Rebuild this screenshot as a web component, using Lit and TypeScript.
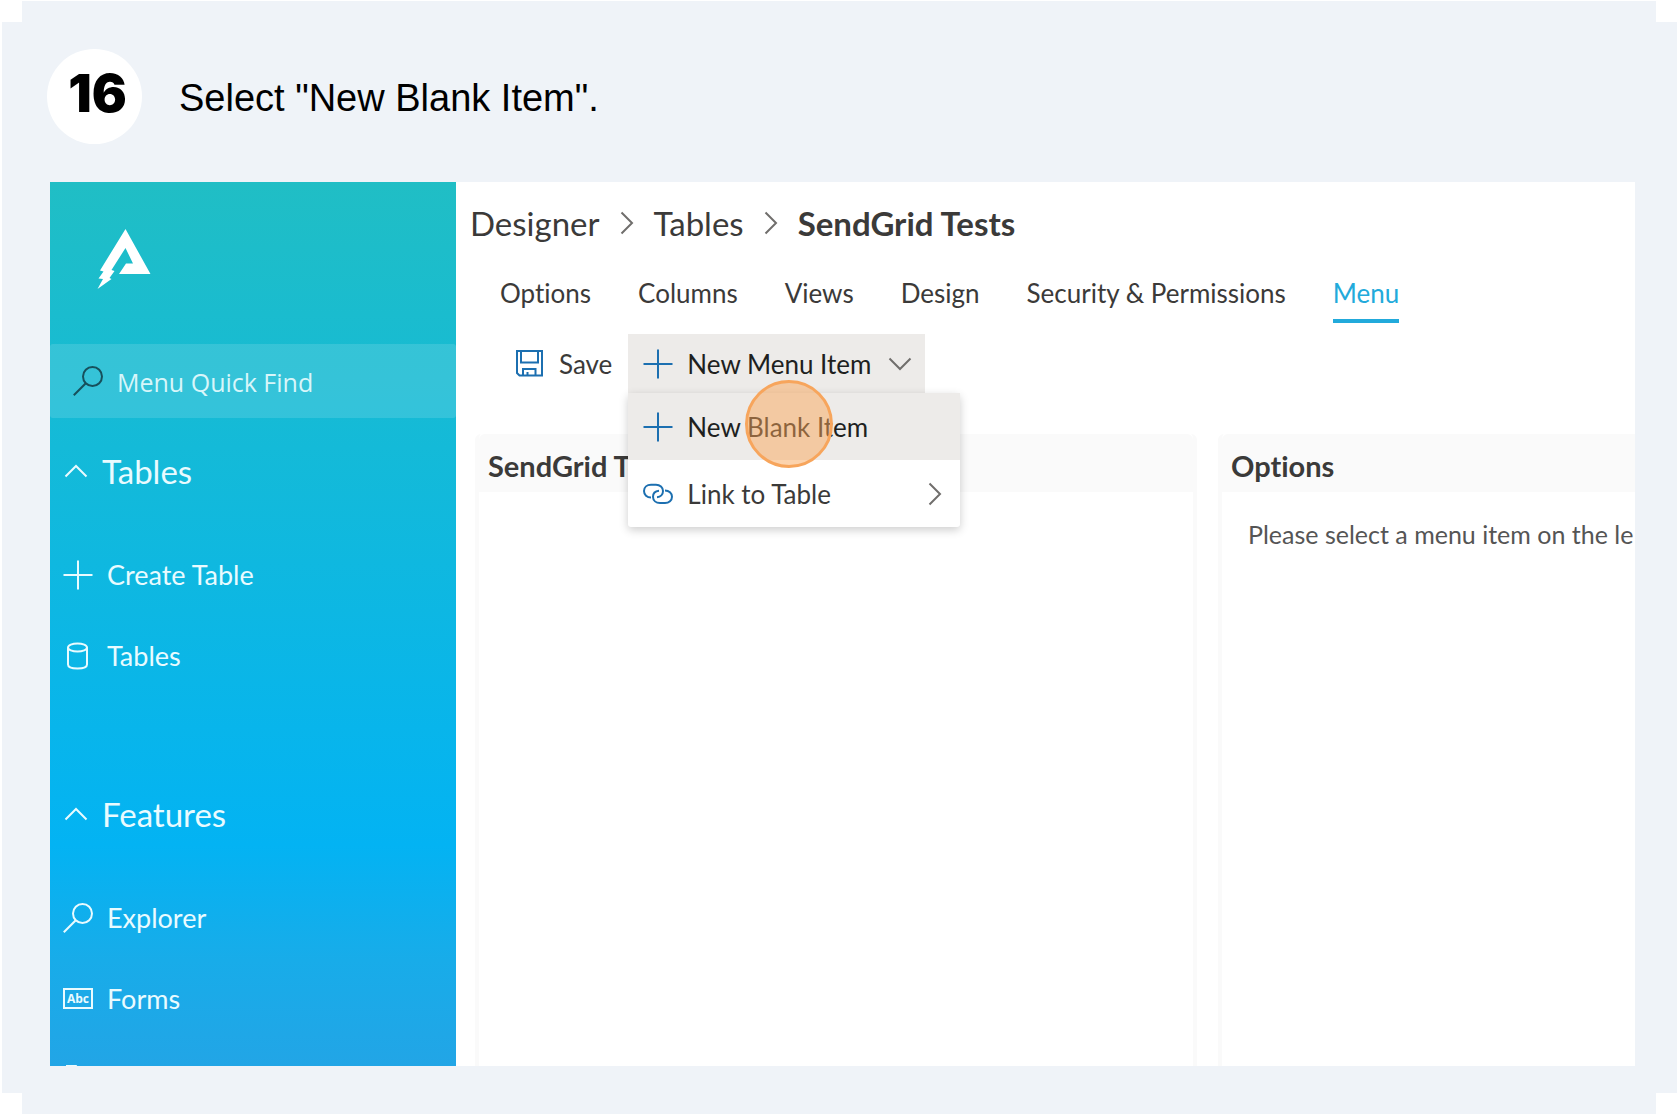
import { LitElement, html, css, svg } from "lit";
import { customElement } from "lit/decorators.js";
import { classMap } from "lit/directives/class-map.js";

const icon = (name: string, body: unknown, box = 30) =>
  html`<svg class=${"icon " + name} viewBox=${`0 0 ${box} ${box}`} aria-hidden="true">${body}</svg>`;

const search = svg`<circle cx="19.5" cy="10.5" r="9.5"/><path d="M12.8 17.2 0.8 29.2"/>`;
const plus = svg`<path d="M15 0.5V29.5M0.5 15H29.5"/>`;
const chevronUp = svg`<path d="M4.5 20.5 15 10 25.5 20.5"/>`;
const chevronDown = svg`<path d="M4.5 9.5 15 20 25.5 9.5"/>`;
const chevronRight = svg`<path d="M9.5 4.5 20 15 9.5 25.5"/>`;
const database = svg`<path d="M5 6.5V23.5C5 26 9 27.5 14.500 27.500S24 26 24 23.500V6.500"/><ellipse cx="14.500" cy="6.500" rx="9.500" ry="4"/>`;
const save = svg`<path d="M2 2H27V26.500H4.500L2 24ZM6 2V13.500H23V2M8 26.500V20H20.500V26.500M12.500 26.500V23"/>`;
const link = svg`<path d="M8 18.500C4 18.500 1 15.800 1 12S4 5.700 8 5.700H13C17 5.700 20 8.500 20 12S17.500 18 14 18.300M22 11.500C26 11.500 29 14.200 29 17.800S26 24 22 24H17C13 24 10 21.500 10 17.800S12.500 12 16 11.700"/>`;
const folder = svg`<path d="M4 29V1H13L16 5H26V29"/>`;
const form = svg`<rect x="1" y="5" width="28" height="19"/><text x="15" y="19" text-anchor="middle">Abc</text>`;

const groups = [
  { title: "Tables", items: [["Create Table", plus], ["Tables", database]] },
  { title: "Features", items: [["Explorer", search], ["Forms", form], ["", folder]] },
] as { title: string; items: [string, unknown][] }[];

const tabs = ["Options", "Columns", "Views", "Design", "Security & Permissions", "Menu"];

@customElement("side-nav")
class SideNav extends LitElement {
  static styles = css`
    :host { display: block; overflow: hidden; color: #e9fbff; font-family: Lato, "Open Sans", sans-serif;
      background: linear-gradient(#20bec5, #14bad8 30%, #03b3f3 75%, #18ace9 88%, #22a5e6); }
    .icon { width: 30px; height: 30px; flex: none; fill: none; stroke: currentColor; stroke-width: 2; overflow: visible; }
    .logo { display: block; width: 54px; height: 60px; margin: 47px 0 55px 47px; fill: #fff; }
    .find { display: flex; align-items: center; gap: 14px; height: 74px; padding-left: 23px;
      background: rgba(255, 255, 255, 0.13); border-radius: 3px; }
    .find .icon { color: #17505c; }
    .find input { flex: 1; min-width: 0; border: 0; padding: 2px 0 0; background: none; outline: none; color: inherit;
      font: 25px/32px "Open Sans", sans-serif; }
    .find input::placeholder { color: #d8f6fa; opacity: 1; }
    .group { margin-top: 18px; }
    .group + .group { margin-top: 83px; }
    .heading { display: flex; align-items: center; gap: 11px; width: 100%; height: 70px; margin: 0 0 28px; padding: 0 0 0 11px;
      border: 0; background: none; color: inherit; font: 33px/40px Lato, sans-serif; text-align: left; }
    .items { list-style: none; margin: 0; padding: 0; }
    .item { display: flex; align-items: center; gap: 14px; height: 81px; padding-left: 13px; color: inherit;
      text-decoration: none; font-size: 27px; line-height: 32px; }
    text { font: bold 12px "Open Sans", sans-serif; fill: currentColor; stroke: none; }
  `;
  render() {
    return html`
      <svg class="logo" viewBox="0 0 54 60" role="img" aria-label="Logo">
        <path d="M28.500 0 53.500 45H22L29 34.500H36L28.500 19 14.500 41 17.500 42 12.500 49 14.500 50 0.500 60 6 50 1.500 49.500 6.500 42.500 3 41.500Z"/>
      </svg>
      <label class="find">${icon("", search)}<input type="text" placeholder="Menu Quick Find" aria-label="Menu Quick Find" /></label>
      <nav>
        ${groups.map((g) => html`
          <section class="group">
            <button class="heading" aria-expanded="true">${icon("", chevronUp)}${g.title}</button>
            <ul class="items">
              ${g.items.map(([label, glyph]) => html`<li><a class="item" href="#">${icon("", glyph)}${label}</a></li>`)}
            </ul>
          </section>`)}
      </nav>`;
  }
}

@customElement("table-designer")
class TableDesigner extends LitElement {
  static styles = css`
    :host { display: block; overflow: hidden; background: #fff; color: #3b3a39; font-family: Lato, "Open Sans", sans-serif;
      font-size: 26px; line-height: 32px; font-variant-ligatures: none; }
    a { color: inherit; text-decoration: none; }
    button { border: 0; background: none; color: inherit; font: inherit; font-variant-ligatures: none; text-align: left; }
    .icon { width: 30px; height: 30px; flex: none; fill: none; stroke: currentColor; stroke-width: 2; overflow: visible; }
    .crumbs { box-sizing: border-box; display: flex; align-items: center; gap: 12px; height: 84px; padding: 0 0 2px 14px;
      font-size: 33px; white-space: nowrap; }
    .crumbs .icon, .chevron { color: #706e6c; }
    .current { font-weight: 700; }
    .tabs { display: flex; gap: 47px; padding-left: 44px; }
    .tab { padding: 2px 0 0; line-height: 51px; border-bottom: 4px solid transparent; white-space: nowrap; }
    .tab.active { color: #22aadb; border-color: #22aadb; }
    .toolbar { display: flex; gap: 1px; margin: 11px 0 41px 44px; }
    .command { display: flex; align-items: center; gap: 14px; height: 59px; padding: 0 15px; white-space: nowrap; }
    .command .icon:first-child { color: #1c6fb0; }
    .open { background: #edebe9; color: #201f1e; padding-right: 10px; }
    .dropdown { position: relative; }
    .menu { position: absolute; z-index: 1; left: 0; top: 100%; width: 332px; background: #fff; border-radius: 3px;
      box-shadow: 0 3px 10px rgba(0, 0, 0, 0.2); }
    .option { width: 100%; height: 67px; padding-right: 10px; }
    .option.hover { background: #edebe9; color: #201f1e; }
    .more { margin-left: auto; }
    .marker { position: absolute; left: 117px; top: -13px; width: 82px; height: 82px; border: 3px solid #f7a55c;
      border-radius: 50%; background: rgba(249, 168, 92, 0.5); pointer-events: none; }
    .panels { display: grid; grid-template-columns: 722px minmax(722px, 1fr); gap: 21px; margin-left: 19px; }
    .panel { min-height: 700px; border: 4px solid #fafafa; border-top: 0; border-radius: 6px 6px 0 0; }
    .title { margin: 0; padding: 6px 0 0 9px; background: #fafafa; font-size: 29px; line-height: 52px; font-weight: 700;
      border-radius: 6px 6px 0 0; }
    .hint { margin: 0; padding: 26px; color: #555; font-size: 25px; white-space: nowrap; }
  `;
  render() {
    return html`
      <nav class="crumbs" aria-label="Breadcrumb">
        <a href="#">Designer</a>${icon("", chevronRight)}<a href="#">Tables</a>${icon("", chevronRight)}<span class="current">SendGrid Tests</span>
      </nav>
      <nav class="tabs">
        ${tabs.map((t) => html`<a href="#" class=${classMap({ tab: true, active: t === "Menu" })}>${t}</a>`)}
      </nav>
      <div class="toolbar">
        <button class="command">${icon("", save)}Save</button>
        <div class="dropdown">
          <button class="command open" aria-expanded="true">${icon("", plus)}New Menu Item${icon("chevron", chevronDown)}</button>
          <div class="menu">
            <button class="command option hover">${icon("", plus)}New Blank Item</button>
            <button class="command option">${icon("", link)}Link to Table${icon("chevron more", chevronRight)}</button>
            <span class="marker"></span>
          </div>
        </div>
      </div>
      <div class="panels">
        <section class="panel"><h2 class="title">SendGrid Tests</h2></section>
        <section class="panel"><h2 class="title">Options</h2><p class="hint">Please select a menu item on the le</p></section>
      </div>`;
  }
}

@customElement("app-root")
class AppRoot extends LitElement {
  static styles = css`
    :host { display: block; background: #fff; }
    .page { box-sizing: border-box; height: 100vh; padding: 1px 3px 6px 2px; }
    .card { box-sizing: border-box; height: 100%; display: flex; flex-direction: column; padding: 48px 42px 48px 45px;
      background: #eff3f8;
      clip-path: polygon(20px 0, calc(100% - 21px) 0, calc(100% - 21px) 21px, 100% 21px, 100% calc(100% - 21px),
        calc(100% - 21px) calc(100% - 21px), calc(100% - 21px) 100%, 20px 100%, 20px calc(100% - 21px), 0 calc(100% - 21px), 0 21px, 20px 21px); }
    .step { display: flex; align-items: center; gap: 37px; margin-bottom: 38px; color: #000; }
    .number { box-sizing: border-box; display: grid; place-items: center; width: 95px; height: 95px; padding: 0 0 5px 6px;
      border-radius: 50%; background: #fff; font: 900 52px/56px Inter, sans-serif; }
    .text { margin: 0; padding-top: 2px; font: 38px/48px "Liberation Sans", Arial, sans-serif; }
    .shot { flex: 1; min-height: 0; display: grid; grid-template-columns: 406px minmax(0, 1fr); grid-template-rows: minmax(0, 1fr);
      margin-left: 3px; overflow: hidden; }
  `;
  render() {
    return html`
      <div class="page">
        <article class="card">
          <header class="step"><span class="number">16</span><h1 class="text">Select "New Blank Item".</h1></header>
          <div class="shot"><side-nav></side-nav><table-designer></table-designer></div>
        </article>
      </div>`;
  }
}
